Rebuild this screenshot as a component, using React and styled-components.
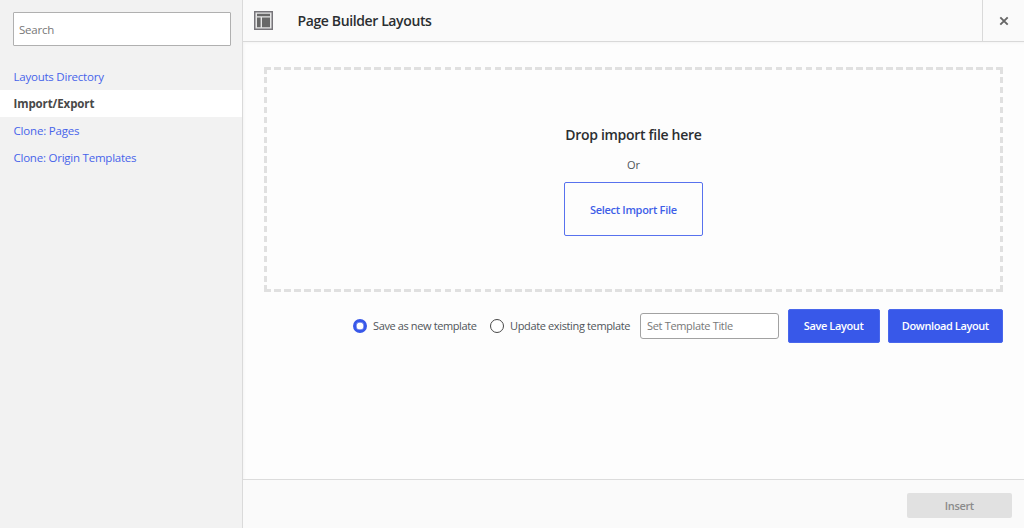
import React, { useState } from 'react';
import styled, { createGlobalStyle } from 'styled-components';

const GlobalStyle = createGlobalStyle`
  * {
    box-sizing: border-box;
  }
  body {
    margin: 0;
    overflow: hidden;
    font-family: 'Open Sans', 'Noto Sans', sans-serif;
    font-size: 11px;
    color: #50555a;
  }
  button, input {
    font-family: inherit;
  }
`;

const Text = styled.span`
  display: inline-block;
  white-space: nowrap;
  letter-spacing: ${({ $spacing }) => $spacing || 0}px;
  margin-right: ${({ $spacing }) => -($spacing || 0)}px;
`;

const Dialog = styled.div`
  display: flex;
  width: 1024px;
  height: 528px;
  background: #fdfdfd;
`;
const Sidebar = styled.aside`
  width: 243px;
  padding-top: 12px;
  background: #f2f2f2;
  border-right: 1px solid #dadada;
`;
const SearchInput = styled.input`
  display: block;
  width: 218px;
  height: 34px;
  margin: 0 0 17px 13px;
  padding: 1px 5px 0 5px;
  border: 1px solid #b0b0b0;
  border-radius: 1px;
  background: white;
  font-size: 11.5px;
  letter-spacing: -0.2px;
  outline: none;
  &::placeholder {
    color: #777;
  }
`;
const NavItem = styled.a`
  display: flex;
  align-items: center;
  height: 27px;
  padding: 0 0 1px 13.5px;
  font-size: 11.5px;
  font-weight: ${({ $active }) => ($active ? 700 : 400)};
  color: ${({ $active }) => ($active ? '#484848' : '#4764ea')};
  background: ${({ $active }) => ($active ? 'white' : 'transparent')};
  cursor: pointer;
  &:last-child {
    padding-bottom: 0;
  }
`;
const Main = styled.main`
  flex: 1;
  display: flex;
  flex-direction: column;
`;
const TitleBar = styled.header`
  display: flex;
  align-items: center;
  height: 42px;
  padding-left: 11px;
  background: #fafafa;
  border-bottom: 1px solid #d9d9d9;
`;
const Title = styled.h1`
  flex: 1;
  margin: 0 0 0 24.5px;
  font-size: 14px;
  font-weight: 600;
  line-height: 20px;
  color: #2b2e31;
`;
const CloseButton = styled.button`
  display: flex;
  align-items: center;
  justify-content: center;
  width: 42px;
  height: 41px;
  padding: 0;
  border: 0;
  border-left: 1px solid #d9d9d9;
  background: transparent;
`;
const Content = styled.div`
  flex: 1;
  padding: 25px 21px 0;
  box-shadow: inset 3px 3px 3px -2px rgba(0, 0, 0, .04);
`;
// dashes are spaced so that every corner ends on a full one
const DropZone = styled.div`
  --h: repeating-linear-gradient(90deg, #e0e0e0 0 6.8px, transparent 6.8px 10.03px);
  --v: repeating-linear-gradient(180deg, #e0e0e0 0 6.5px, transparent 6.5px 9.93px);
  display: flex;
  flex-direction: column;
  align-items: center;
  width: 739px;
  height: 225px;
  padding-top: 58px;
  background:
    var(--h) top / 100% 3.4px no-repeat,
    var(--h) bottom / 100% 3.4px no-repeat,
    var(--v) left / 3.4px 100% no-repeat,
    var(--v) right / 3.4px 100% no-repeat;
`;
const DropTitle = styled.h2`
  margin: 0;
  font-size: 14px;
  font-weight: 600;
  line-height: 20px;
  color: #2b2e31;
`;
const Or = styled.p`
  margin: 11px 0 9px;
  line-height: 17px;
`;
const SelectButton = styled.button`
  width: 139px;
  height: 54px;
  padding: 0;
  border: 1px solid #5872ee;
  border-radius: 2px;
  background: #fdfdfd;
  color: #3f5fe8;
  font-size: 11px;
  font-weight: 600;
`;
const ExportRow = styled.div`
  display: flex;
  align-items: center;
  justify-content: flex-end;
  width: 739px;
  height: 34px;
  margin-top: 17px;
`;
const Option = styled.label`
  display: flex;
  align-items: center;
  width: ${({ $width }) => $width}px;
`;
const Radio = styled.input.attrs({ type: 'radio' })`
  appearance: none;
  flex-shrink: 0;
  width: 14px;
  height: 14px;
  margin: 0 6px 0 0;
  border: ${({ checked }) => (checked ? '3px solid #3858e9' : '1px solid #484848')};
  border-radius: 50%;
  background: white;
  box-shadow: ${({ checked }) => (checked ? 'inset 0 0 0 0.5px #3858e9' : 'none')};
`;
const OptionText = styled(Text)`
  padding-bottom: 1px;
`;
const TemplateInput = styled.input`
  width: 139px;
  height: 26px;
  padding: 0 6px 1px;
  border: 1px solid #a2a2a2;
  border-radius: 3px;
  background: white;
  font-size: 11px;
  letter-spacing: -0.33px;
  outline: none;
  &::placeholder {
    color: #777;
  }
`;
const PrimaryButton = styled.button`
  width: ${({ $width }) => $width}px;
  height: 34px;
  margin-left: ${({ $gap }) => $gap}px;
  padding: 0 0 1px;
  border: 1px solid #4967ec;
  border-radius: 2px;
  background: #3858e9;
  color: white;
  font-size: 11px;
  font-weight: 600;
`;
const Footer = styled.footer`
  display: flex;
  justify-content: flex-end;
  height: 49px;
  padding: 13px 12px 0 0;
  background: #fafafa;
  border-top: 1px solid #dcdcdc;
`;
const InsertButton = styled.button`
  width: 105px;
  height: 25px;
  padding: 0;
  border: 0;
  border-radius: 2px;
  background: #e1e1e1;
  color: #8b8b8b;
  font-size: 11px;
  font-weight: 600;
`;

const navItems = [
  { label: 'Layouts Directory', spacing: -0.23 },
  { label: 'Import/Export', spacing: -0.1 },
  { label: 'Clone: Pages', spacing: -0.18 },
  { label: 'Clone: Origin Templates', spacing: -0.23 },
];

function LayoutIcon() {
  return (
    <svg width="19" height="19" viewBox="0 0 19 19">
      <rect x="0.75" y="0.75" width="17.5" height="17.5" fill="#e6e6e6" stroke="#77757a" strokeWidth="1.5" />
      <path d="M3 2.8h13v2.4H3zM3 6.6h3.6v9.6H3zM8 6.6h8v9.6H8z" fill="#686868" />
    </svg>
  )
}

function App() {
  const [active, setActive] = useState('Import/Export');
  const [mode, setMode] = useState('new');

  return (
    <>
      <GlobalStyle />
      <Dialog>
        <Sidebar>
          <SearchInput placeholder="Search" />
          <nav>
            {navItems.map(({ label, spacing }) => (
              <NavItem key={label} $active={label === active} onClick={() => setActive(label)}>
                <Text $spacing={spacing}>{label}</Text>
              </NavItem>
            ))}
          </nav>
        </Sidebar>
        <Main>
          <TitleBar>
            <LayoutIcon />
            <Title><Text $spacing={-0.38}>Page Builder Layouts</Text></Title>
            <CloseButton aria-label="Close">
              <svg width="10" height="10" viewBox="0 0 10 10">
                <path d="M1.3 1.3l7.4 7.4M8.7 1.3L1.3 8.7" stroke="#666" strokeWidth="1.9" />
              </svg>
            </CloseButton>
          </TitleBar>
          <Content>
            <DropZone>
              <DropTitle><Text $spacing={-0.3}>Drop import file here</Text></DropTitle>
              <Or>Or</Or>
              <SelectButton><Text $spacing={-0.3}>Select Import File</Text></SelectButton>
            </DropZone>
            <ExportRow>
              <Option $width={137}>
                <Radio name="mode" checked={mode === 'new'} onChange={() => setMode('new')} />
                <OptionText $spacing={-0.38}>Save as new template</OptionText>
              </Option>
              <Option $width={150}>
                <Radio name="mode" checked={mode === 'existing'} onChange={() => setMode('existing')} />
                <OptionText $spacing={-0.36}>Update existing template</OptionText>
              </Option>
              <TemplateInput placeholder="Set Template Title" />
              <PrimaryButton $width={92.5} $gap={8.5}><Text $spacing={-0.38}>Save Layout</Text></PrimaryButton>
              <PrimaryButton $width={115} $gap={8}><Text $spacing={-0.4}>Download Layout</Text></PrimaryButton>
            </ExportRow>
          </Content>
          <Footer>
            <InsertButton><Text $spacing={-0.35}>Insert</Text></InsertButton>
          </Footer>
        </Main>
      </Dialog>
    </>
  )
}

export default App;
